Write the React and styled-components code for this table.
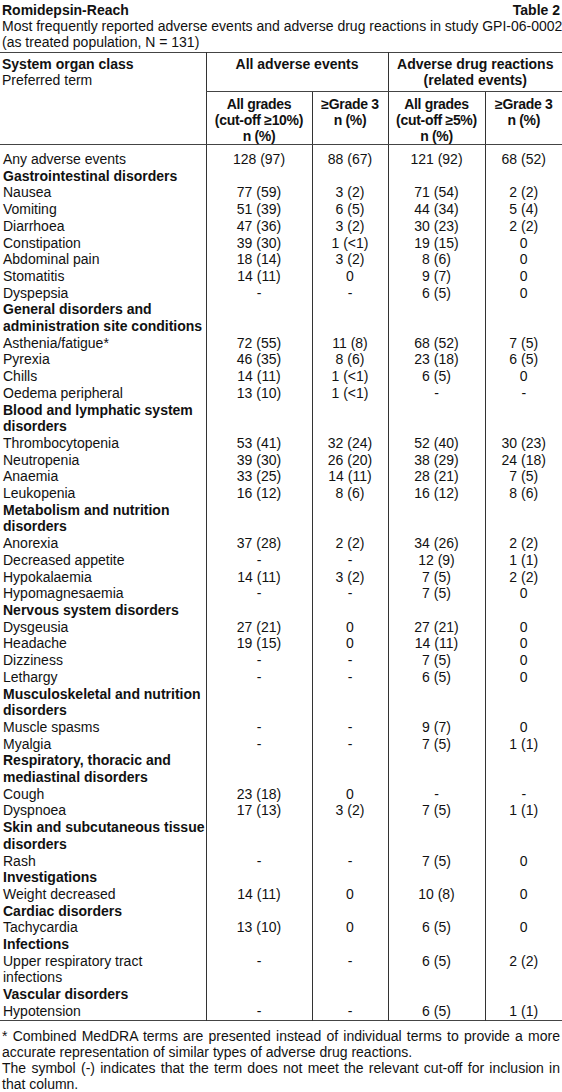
import React from "react";
import styled, { createGlobalStyle } from "styled-components";

const GlobalStyle = createGlobalStyle`
  html, body {
    margin: 0;
    padding: 0;
    background: #fff;
  }
  body {
    font-family: "Liberation Sans", Arial, sans-serif;
    color: #111;
  }
`;

const Page = styled.div`
  width: 562px;
  padding-top: 2px;
  font-size: 14px;
  line-height: 16px;
`;

const TitleBar = styled.div`
  display: flex;
  justify-content: space-between;
  padding: 0 2px;
  font-weight: bold;
`;

const Caption = styled.div`
  padding: 0 2px;
  white-space: nowrap;
  text-align: ${({ $justify }) => ($justify ? "justify" : "left")};
  text-align-last: ${({ $justify }) => ($justify ? "justify" : "auto")};
`;

const Table = styled.table`
  width: 562px;
  margin-top: 2px;
  border-collapse: collapse;
  table-layout: fixed;
  border-top: 1px solid #444;
  border-bottom: 1px solid #444;
`;

const Th = styled.th`
  padding: ${({ $sub }) => ($sub ? "4px 0 0" : "3px 2px")};
  font-weight: bold;
  vertical-align: top;
  white-space: nowrap;
  letter-spacing: ${({ $sub }) => ($sub ? "-0.3px" : "0")};
  text-align: ${({ $left }) => ($left ? "left" : "center")};
  border-left: ${({ $left }) => ($left ? "none" : "1px solid #333")};
  border-bottom: 1px solid #444;
`;

const Plain = styled.span`
  font-weight: normal;
`;

const Td = styled.td`
  padding: ${({ $first }) => ($first ? "6px 3px 0" : "0 3px")};
  line-height: 16.7px;
  vertical-align: top;
  text-align: ${({ $left }) => ($left ? "left" : "center")};
  border-left: ${({ $left }) => ($left ? "none" : "1px solid #333")};
  font-weight: ${({ $bold }) => ($bold ? "bold" : "normal")};
  white-space: nowrap;
`;

const Notes = styled.div`
  padding: 7px 0 0;
`;

const rows = [
  { t: ["Any adverse events"], v: ["128 (97)", "88 (67)", "121 (92)", "68 (52)"] },
  { soc: ["Gastrointestinal disorders"] },
  { t: ["Nausea"], v: ["77 (59)", "3 (2)", "71 (54)", "2 (2)"] },
  { t: ["Vomiting"], v: ["51 (39)", "6 (5)", "44 (34)", "5 (4)"] },
  { t: ["Diarrhoea"], v: ["47 (36)", "3 (2)", "30 (23)", "2 (2)"] },
  { t: ["Constipation"], v: ["39 (30)", "1 (<1)", "19 (15)", "0"] },
  { t: ["Abdominal pain"], v: ["18 (14)", "3 (2)", "8 (6)", "0"] },
  { t: ["Stomatitis"], v: ["14 (11)", "0", "9 (7)", "0"] },
  { t: ["Dyspepsia"], v: ["-", "-", "6 (5)", "0"] },
  { soc: ["General disorders and", "administration site conditions"] },
  { t: ["Asthenia/fatigue*"], v: ["72 (55)", "11 (8)", "68 (52)", "7 (5)"] },
  { t: ["Pyrexia"], v: ["46 (35)", "8 (6)", "23 (18)", "6 (5)"] },
  { t: ["Chills"], v: ["14 (11)", "1 (<1)", "6 (5)", "0"] },
  { t: ["Oedema peripheral"], v: ["13 (10)", "1 (<1)", "-", "-"] },
  { soc: ["Blood and lymphatic system", "disorders"] },
  { t: ["Thrombocytopenia"], v: ["53 (41)", "32 (24)", "52 (40)", "30 (23)"] },
  { t: ["Neutropenia"], v: ["39 (30)", "26 (20)", "38 (29)", "24 (18)"] },
  { t: ["Anaemia"], v: ["33 (25)", "14 (11)", "28 (21)", "7 (5)"] },
  { t: ["Leukopenia"], v: ["16 (12)", "8 (6)", "16 (12)", "8 (6)"] },
  { soc: ["Metabolism and nutrition", "disorders"] },
  { t: ["Anorexia"], v: ["37 (28)", "2 (2)", "34 (26)", "2 (2)"] },
  { t: ["Decreased appetite"], v: ["-", "-", "12 (9)", "1 (1)"] },
  { t: ["Hypokalaemia"], v: ["14 (11)", "3 (2)", "7 (5)", "2 (2)"] },
  { t: ["Hypomagnesaemia"], v: ["-", "-", "7 (5)", "0"] },
  { soc: ["Nervous system disorders"] },
  { t: ["Dysgeusia"], v: ["27 (21)", "0", "27 (21)", "0"] },
  { t: ["Headache"], v: ["19 (15)", "0", "14 (11)", "0"] },
  { t: ["Dizziness"], v: ["-", "-", "7 (5)", "0"] },
  { t: ["Lethargy"], v: ["-", "-", "6 (5)", "0"] },
  { soc: ["Musculoskeletal and nutrition", "disorders"] },
  { t: ["Muscle spasms"], v: ["-", "-", "9 (7)", "0"] },
  { t: ["Myalgia"], v: ["-", "-", "7 (5)", "1 (1)"] },
  { soc: ["Respiratory, thoracic and", "mediastinal disorders"] },
  { t: ["Cough"], v: ["23 (18)", "0", "-", "-"] },
  { t: ["Dyspnoea"], v: ["17 (13)", "3 (2)", "7 (5)", "1 (1)"] },
  { soc: ["Skin and subcutaneous tissue", "disorders"] },
  { t: ["Rash"], v: ["-", "-", "7 (5)", "0"] },
  { soc: ["Investigations"] },
  { t: ["Weight decreased"], v: ["14 (11)", "0", "10 (8)", "0"] },
  { soc: ["Cardiac disorders"] },
  { t: ["Tachycardia"], v: ["13 (10)", "0", "6 (5)", "0"] },
  { soc: ["Infections"] },
  { t: ["Upper respiratory tract", "infections"], v: ["-", "-", "6 (5)", "2 (2)"] },
  { soc: ["Vascular disorders"] },
  { t: ["Hypotension"], v: ["-", "-", "6 (5)", "1 (1)"] },
];

const lines = (arr) =>
  arr.map((l, i) => (
    <React.Fragment key={i}>
      {i > 0 && <br />}
      {l}
    </React.Fragment>
  ));

export default function App() {
  return (
    <Page>
      <GlobalStyle />
      <TitleBar>
        <span>Romidepsin-Reach</span>
        <span>Table 2</span>
      </TitleBar>
      <Caption $justify>
        Most frequently reported adverse events and adverse drug reactions in study GPI-06-0002
      </Caption>
      <Caption>(as treated population, N = 131)</Caption>

      <Table>
        <colgroup>
          <col style={{ width: 206 }} />
          <col style={{ width: 106 }} />
          <col style={{ width: 76 }} />
          <col style={{ width: 97 }} />
          <col style={{ width: 77 }} />
        </colgroup>
        <thead>
          <tr>
            <Th $left rowSpan={2}>
              System organ class
              <br />
              <Plain>Preferred term</Plain>
            </Th>
            <Th colSpan={2}>All adverse events</Th>
            <Th colSpan={2}>
              Adverse drug reactions
              <br />
              (related events)
            </Th>
          </tr>
          <tr>
            <Th $sub>
              All grades
              <br />
              (cut-off ≥10%)
              <br />n (%)
            </Th>
            <Th $sub>
              ≥Grade 3
              <br />n (%)
            </Th>
            <Th $sub>
              All grades
              <br />
              (cut-off ≥5%)
              <br />n (%)
            </Th>
            <Th $sub>
              ≥Grade 3
              <br />n (%)
            </Th>
          </tr>
        </thead>
        <tbody>
          {rows.map((r, i) => (
            <tr key={i}>
              <Td $left $first={i === 0} $bold={!!r.soc}>
                {lines(r.soc || r.t)}
              </Td>
              {[0, 1, 2, 3].map((c) => (
                <Td key={c} $first={i === 0}>
                  {r.v ? r.v[c] : ""}
                </Td>
              ))}
            </tr>
          ))}
        </tbody>
      </Table>

      <Notes>
        <Caption $justify>
          * Combined MedDRA terms are presented instead of individual terms to provide a more
        </Caption>
        <Caption>accurate representation of similar types of adverse drug reactions.</Caption>
        <Caption $justify>
          The symbol (-) indicates that the term does not meet the relevant cut-off for inclusion in
        </Caption>
        <Caption>that column.</Caption>
      </Notes>
    </Page>
  );
}
